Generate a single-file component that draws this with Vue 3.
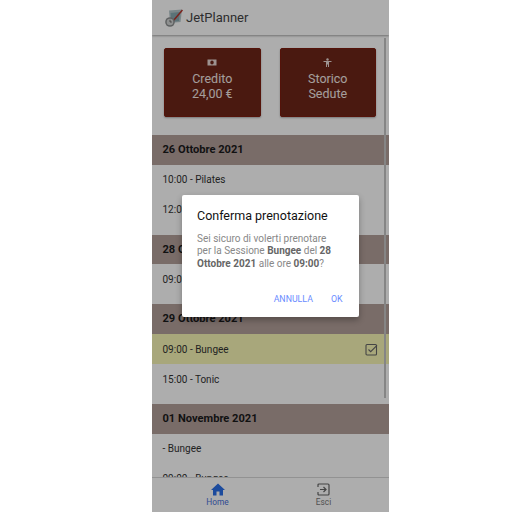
<script setup>
const days = [
  { date: '26 Ottobre 2021', rows: [{ t: '10:00 - Pilates' }, { t: '12:00 - Pilates' }] },
  { date: '28 Ottobre 2021', rows: [{ t: '09:00 - Bungee' }] },
  { date: '29 Ottobre 2021', rows: [{ t: '09:00 - Bungee', booked: true }, { t: '15:00 - Tonic' }] },
  { date: '01 Novembre 2021', rows: [{ t: '- Bungee' }, { t: '09:00 - Bungee' }] },
]
</script>

<template>
  <div class="phone">
    <header class="top">
      <svg class="logo" width="18" height="18" viewBox="0 0 18 18">
        <path d="M4 1.500 L17 .5 L15.500 13 L5 14 Z" fill="#b4c6ca" />
        <path d="M5.500 4 L15 3 L14 12 L6.500 13 Z" fill="#86a8b0" />
        <path d="M8.500 11.500 L17.500 1" stroke="#b5332a" stroke-width="1.500" fill="none" />
        <circle cx="5" cy="13" r="4.800" fill="#8b8f90" />
        <circle cx="5" cy="13" r="3.300" fill="#d2d4d4" />
        <path d="M5 10.800 V13 H6.800" stroke="#555" stroke-width=".8" fill="none" />
      </svg>
      <span class="brand">JetPlanner</span>
    </header>

    <main class="scroll">
      <div class="cards">
        <button class="card">
          <svg class="cicon" width="10" height="9" viewBox="0 0 10 9">
            <rect x=".5" y="1.500" width="9" height="6" fill="#e8d8d4" />
            <rect x="3.300" y="2.500" width="3.400" height="4" rx="1.700" fill="#6d2619" />
          </svg>
          <span>Credito</span>
          <span>24,00 €</span>
        </button>
        <button class="card">
          <svg class="cicon" width="9" height="9" viewBox="0 0 9 9">
            <circle cx="4.500" cy="1.500" r="1.200" fill="#e8d8d4" />
            <path d="M.5 3 H8.500 V4 H6 V9 H5 V6.500 H4 V9 H3 V4 H.5 Z" fill="#e8d8d4" />
          </svg>
          <span>Storico</span>
          <span>Sedute</span>
        </button>
      </div>

      <section v-for="d in days" :key="d.date" class="day">
        <h2 class="date">{{ d.date }}</h2>
        <div v-for="(r, i) in d.rows" :key="i" class="row" :class="{ booked: r.booked }">
          <span>{{ r.t }}</span>
          <svg v-if="r.booked" width="13" height="13" viewBox="0 0 13 13" fill="none">
            <rect x="1" y="1.500" width="10.500" height="10.500" rx="1" stroke="#666" stroke-width="1.100" />
            <path d="M3.500 6.500 L5.700 8.700 L12 2.300" stroke="#666" stroke-width="1.100" />
          </svg>
        </div>
      </section>
    </main>

    <nav class="bottom">
      <div class="tab active">
        <svg width="14" height="13" viewBox="0 0 14 13">
          <path d="M7 .5 L14 7 H12 V12.500 H8.500 V8.500 H5.500 V12.500 H2 V7 H0 Z" fill="#2a6fe8" />
        </svg>
        <span>Home</span>
      </div>
      <div class="tab">
        <svg width="13" height="13" viewBox="0 0 13 13" fill="none">
          <path d="M1 4 V2 Q1 1 2 1 H11 Q12 1 12 2 V11 Q12 12 11 12 H2 Q1 12 1 11 V9" stroke="#666" stroke-width="1.200" />
          <path d="M3 6.500 H9 M6.500 4 L9 6.500 L6.500 9" stroke="#666" stroke-width="1.200" />
        </svg>
        <span>Esci</span>
      </div>
    </nav>

    <div class="overlay">
      <div class="dialog">
        <h3 class="title">Conferma prenotazione</h3>
        <p class="msg">
          Sei sicuro di volerti prenotare per la Sessione <b>Bungee</b> del <b>28 Ottobre 2021</b> alle ore <b>09:00</b>?
        </p>
        <div class="actions">
          <span>ANNULLA</span>
          <span>OK</span>
        </div>
      </div>
    </div>
  </div>
</template>

<style>
html, body { margin: 0; background: #fff; }
</style>

<style scoped>
.phone {
  position: relative;
  width: 237px;
  height: 512px;
  margin-left: 152px;
  background: #fff;
  display: flex;
  flex-direction: column;
  overflow: hidden;
  font-family: Roboto, sans-serif;
  color: #222;
}
.top {
  height: 35px;
  flex: none;
  display: flex;
  align-items: center;
  gap: 3px;
  padding-left: 13px;
  box-sizing: border-box;
  box-shadow: 0 1px 2px rgba(0, 0, 0, .35);
  position: relative;
}
.brand { font-size: 13px; color: #444; }
.scroll {
  flex: 1;
  min-height: 0;
  overflow: hidden;
  position: relative;
}
.scroll::after {
  content: '';
  position: absolute;
  right: 3px;
  top: 3px;
  width: 2px;
  height: 360px;
  background: #c4c4c4;
}
.cards {
  display: flex;
  gap: 19px;
  padding: 13px 13px 18px 12px;
}
.card {
  flex: 1;
  height: 69px;
  border: 1px solid #7d1d10;
  border-radius: 2px;
  background: #6d2619;
  color: #f3e9e6;
  font: 12.500px/15px Roboto, sans-serif;
  display: flex;
  flex-direction: column;
  align-items: center;
  justify-content: flex-start;
  padding: 9px 0 0;
  box-shadow: 0 1px 2px rgba(0, 0, 0, .3);
}
.cicon { margin-bottom: 4px; }
.day { margin-bottom: 10px; }
.date {
  margin: 0;
  height: 29.700px;
  line-height: 29.700px;
  padding-left: 10.500px;
  font-size: 11.100px;
  font-weight: 700;
  background: #b39f9a;
  color: #1a1a1a;
}
.row {
  height: 30px;
  padding: 0 11px 0 10.500px;
  display: flex;
  align-items: center;
  justify-content: space-between;
  font-size: 10px;
  color: #333;
}
.row.booked { background: #f8f7b5; }
.bottom {
  height: 35px;
  flex: none;
  display: flex;
  padding: 0 12.500px;
  background: #fff;
  border-top: 1px solid #d8d8d8;
  box-sizing: border-box;
}
.tab {
  flex: 1;
  display: flex;
  flex-direction: column;
  align-items: center;
  justify-content: flex-start;
  padding-top: 5px;
  gap: 1px;
  font-size: 8.300px;
  color: #777;
}
.tab.active { color: #4a6fd8; }
.overlay {
  position: absolute;
  inset: 0;
  background: rgba(0, 0, 0, .32);
  display: flex;
  align-items: center;
  justify-content: center;
}
.dialog {
  width: 177px;
  height: 122px;
  box-sizing: border-box;
  background: #fff;
  border-radius: 2px;
  padding: 13px 15px 0;
  display: flex;
  flex-direction: column;
  box-shadow: 0 3px 6px rgba(0, 0, 0, .3);
}
.title { margin: 0; font-size: 12.500px; line-height: 16px; font-weight: 400; color: #111; }
.msg { margin: 9px 7px 0 0; font-size: 10px; line-height: 12.300px; color: #888; }
.msg b { color: #666; font-weight: 700; }
.actions {
  margin-top: auto;
  margin-right: 1.500px;
  padding-bottom: 13px;
  display: flex;
  justify-content: flex-end;
  gap: 18px;
  font-size: 8.800px;
  color: #6a8cff;
}
</style>
